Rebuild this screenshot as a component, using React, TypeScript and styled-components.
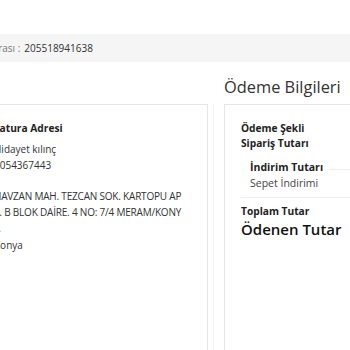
import React from "react";
import styled, { createGlobalStyle } from "styled-components";

const GlobalStyle = createGlobalStyle`
  html, body { margin: 0; padding: 0; background: #fff; overflow: hidden; }
  body { font-family: "Open Sans", "Noto Sans", sans-serif; color: #333; }
`;

const Page = styled.div`
  width: 480px;
  margin-left: -64px;
  padding-top: 34px;
`;

const OrderBar = styled.div`
  height: 28px;
  background: #f5f5f5;
  display: flex;
  align-items: center;
  padding-left: 0;
  font-size: 10px;
  white-space: nowrap;
`;

const BarLabel = styled.span`
  color: #777;
  margin-right: 4px;
`;

const BarValue = styled.span`
  color: #333;
`;

const Columns = styled.div`
  display: grid;
  grid-template-columns: 231px 1fr;
  column-gap: 5px;
  padding-left: 41px;
  margin-top: 13px;
`;

const ColumnTitle = styled.h2<{ $col: number }>`
  grid-column: ${(p) => p.$col};
  margin: 0 0 5px;
  padding-left: 11px;
  font-size: 16.4px;
  font-weight: 400;
  line-height: 24px;
  color: #333;
`;

const Panel = styled.div`
  grid-column: 1;
  border: 1px solid #e6e6e6;
  border-bottom: none;
  height: 246px;
  padding: 16px 22px 0 16px;
  box-sizing: border-box;
`;

const PanelWrap = styled.div`
  grid-column: 2;
  border-left: 1px solid #f3f3f3;
  padding-left: 10px;
`;

const RightPanel = styled.div`
  border: 1px solid #e6e6e6;
  border-right: none;
  border-bottom: none;
  height: 246px;
  padding: 16px 0 0 16px;
  box-sizing: border-box;
`;

const Heading = styled.div`
  font-size: 10.2px;
  font-weight: 700;
  line-height: 15px;
  color: #222;
`;

const Line = styled.div<{ $gap?: number }>`
  font-size: 10px;
  line-height: 16px;
  margin-top: ${(p) => p.$gap ?? 0}px;
  color: #333;
`;

const Address = styled.div`
  font-size: 10px;
  letter-spacing: -0.2px;
  line-height: 16px;
  margin-top: 15px;
  color: #333;
  word-break: break-all;
`;

const SubBlock = styled.div`
  padding-left: 9px;
  margin-top: 8px;
  padding-bottom: 5px;
  border-bottom: 1px solid #eee;
`;

const SubHead = styled.div`
  display: flex;
  align-items: center;
  font-size: 10.5px;
  font-weight: 700;
  line-height: 16px;
  color: #222;
`;

const SubRule = styled.span`
  flex: 1;
  margin-left: 6px;
  margin-top: 4px;
  border-top: 1px solid #eee;
`;

const SubLine = styled.div`
  font-size: 10.5px;
  line-height: 17px;
  color: #444;
`;

const Total = styled.div`
  font-size: 10.2px;
  font-weight: 700;
  line-height: 15px;
  margin-top: 6px;
  color: #222;
`;

const Paid = styled.div`
  font-size: 15px;
  font-weight: 600;
  line-height: 20px;
  color: #111;
`;

export default function App() {
  return (
    <>
      <GlobalStyle />
      <Page>
        <OrderBar>
          <BarLabel>Sipariş Numarası :</BarLabel>
          <BarValue>205518941638</BarValue>
        </OrderBar>
        <Columns>
          <ColumnTitle $col={2}>Ödeme Bilgileri</ColumnTitle>
          <Panel>
            <Heading>Fatura Adresi</Heading>
            <Line $gap={5}>Hidayet kılınç</Line>
            <Line>5054367443</Line>
            <Address>
              HAVZAN MAH. TEZCAN SOK. KARTOPU APT. B BLOK DAİRE. 4 NO: 7/4 MERAM/KONYA
            </Address>
            <Line $gap={1}>Konya</Line>
          </Panel>
          <PanelWrap>
            <RightPanel>
              <Heading>Ödeme Şekli</Heading>
              <Heading>Sipariş Tutarı</Heading>
              <SubBlock>
                <SubHead>
                  İndirim Tutarı
                  <SubRule />
                </SubHead>
                <SubLine>Sepet İndirimi</SubLine>
              </SubBlock>
              <Total>Toplam Tutar</Total>
              <Paid>Ödenen Tutar</Paid>
            </RightPanel>
          </PanelWrap>
        </Columns>
      </Page>
    </>
  );
}
